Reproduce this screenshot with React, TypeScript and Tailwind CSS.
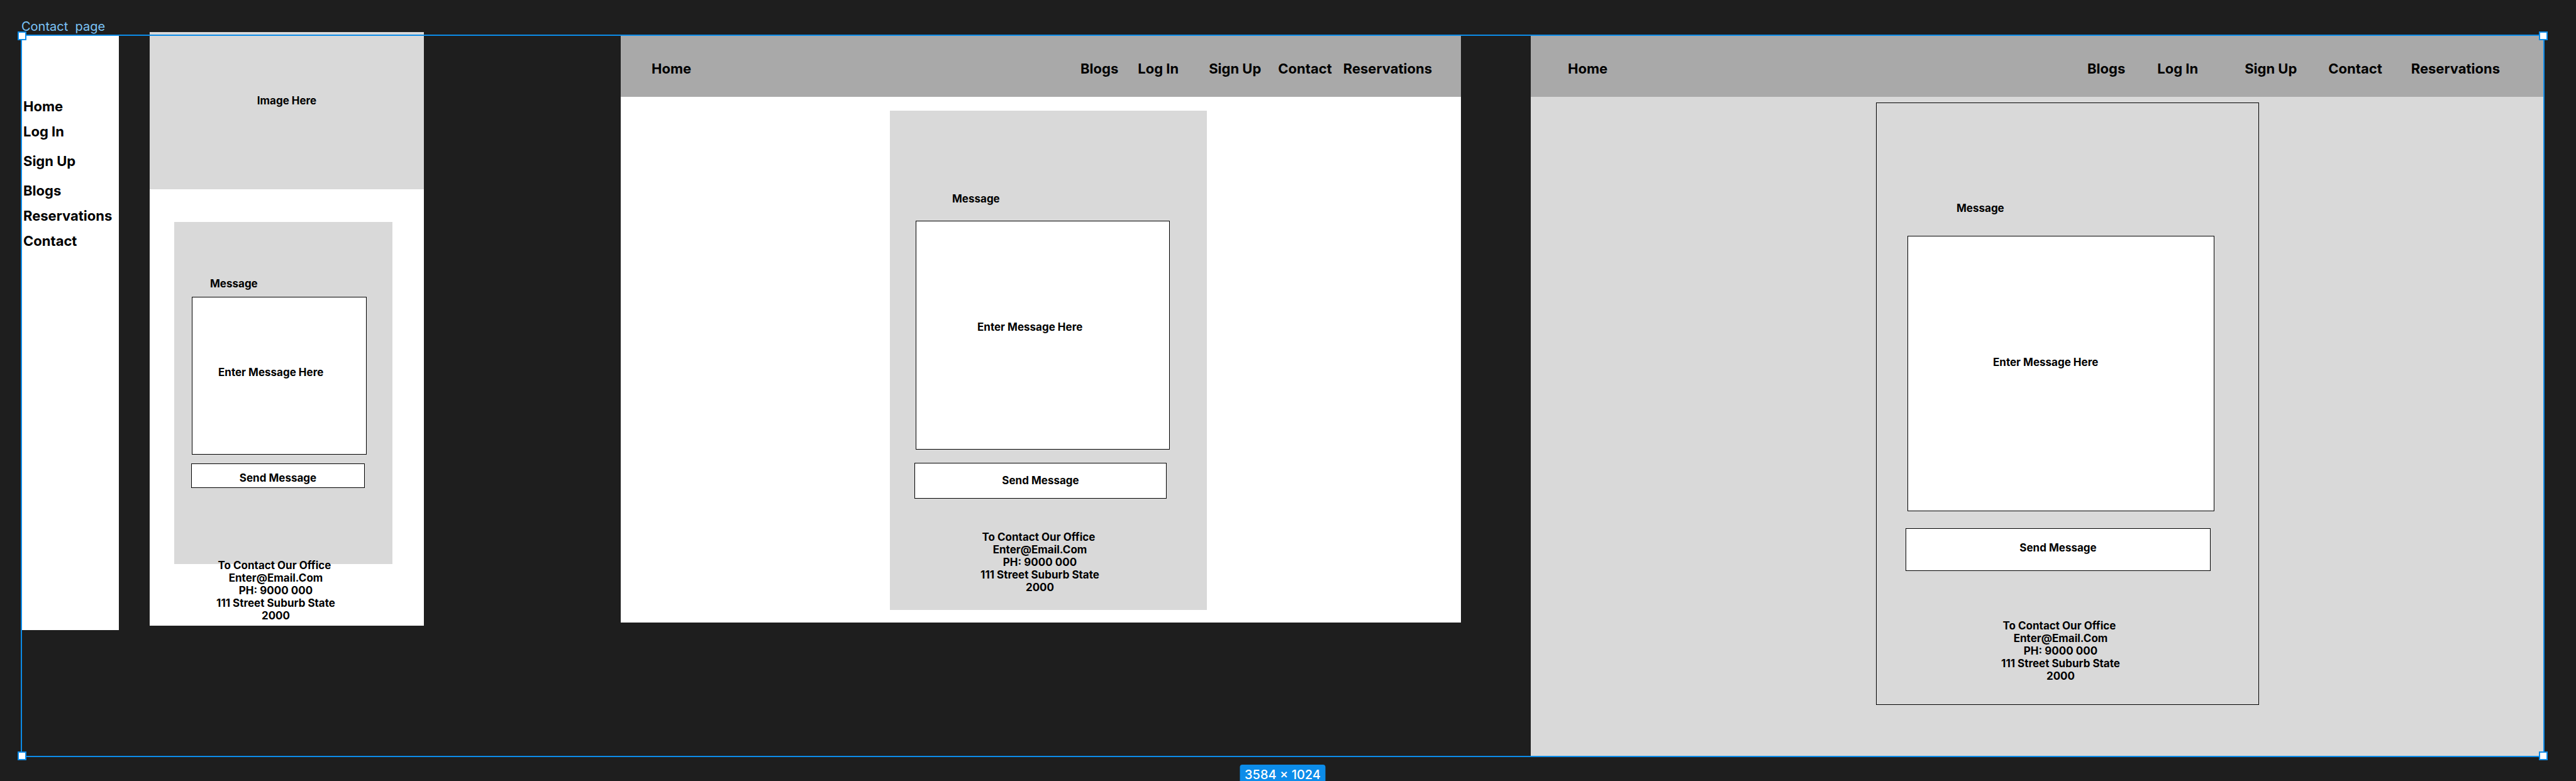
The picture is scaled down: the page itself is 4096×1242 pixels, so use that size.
import React from "react";

type NavLink = { label: string; className: string };

const menuLinks: NavLink[] = [
  { label: "Home", className: "" },
  { label: "Log In", className: "" },
  { label: "Sign Up", className: "my-[7px]" },
  { label: "Blogs", className: "" },
  { label: "Reservations", className: "" },
  { label: "Contact", className: "" },
];

const tabletLinks: NavLink[] = [
  { label: "Blogs", className: "" },
  { label: "Log In", className: "ml-[31px]" },
  { label: "Sign Up", className: "ml-12" },
  { label: "Contact", className: "ml-[27px]" },
  { label: "Reservations", className: "ml-[18px]" },
];

const desktopLinks: NavLink[] = [
  { label: "Blogs", className: "" },
  { label: "Log In", className: "ml-[51px]" },
  { label: "Sign Up", className: "ml-[74px]" },
  { label: "Contact", className: "ml-[50px]" },
  { label: "Reservations", className: "ml-[46px]" },
];

function SiteHeader({ links, className }: { links: NavLink[]; className: string }) {
  return (
    <header
      className={`flex justify-between bg-[#a9a9a9] pt-[39px] pb-[31px] text-[22px] leading-[28px] ${className}`}
    >
      <a href="#home">Home</a>
      <nav className="flex">
        {links.map((link) => (
          <a key={link.label} href="#" className={link.className}>
            {link.label}
          </a>
        ))}
      </nav>
    </header>
  );
}

function MessageForm(props: {
  id: string;
  label: string;
  box: string;
  button: string;
}) {
  return (
    <form className="flex flex-col" onSubmit={(e) => e.preventDefault()}>
      <label htmlFor={props.id} className={props.label}>
        Message
      </label>
      <textarea
        id={props.id}
        placeholder="Enter Message Here"
        className={`block resize-none overflow-hidden border border-black bg-white placeholder:text-black placeholder:opacity-100 ${props.box}`}
      />
      <button
        type="submit"
        className={`border border-black bg-white text-center ${props.button}`}
      >
        Send Message
      </button>
    </form>
  );
}

function OfficeDetails({ className }: { className: string }) {
  return (
    <address className={`text-center whitespace-pre not-italic ${className}`}>
      <p>{"To Contact Our Office "}</p>
      <p>Enter@Email.Com</p>
      <p>PH: 9000 000</p>
      <p>111 Street Suburb State</p>
      <p>2000</p>
    </address>
  );
}

function MenuFrame() {
  return (
    <section className="min-w-0 flex-[155_1_0px] bg-white">
      <nav className="flex flex-col gap-3 pt-[99px] pb-[605px] pl-[3px] text-[22px] leading-[28px]">
        {menuLinks.map((link) => (
          <a key={link.label} href="#" className={link.className}>
            {link.label}
          </a>
        ))}
      </nav>
    </section>
  );
}

function MobileFrame() {
  return (
    <section className="-mt-[5px] ml-[49px] min-w-0 flex-[436_1_0px] bg-white pb-[6px]">
      <div className="bg-[#d9d9d9] pt-[99px] pb-[131px] text-center">Image Here</div>
      <div className="mt-[52px] grid grid-cols-[39fr_347fr_50fr]">
        <div className="col-start-2 bg-[#d9d9d9] pt-[88px] pb-[121px]">
          <MessageForm
            id="message-mobile"
            label="ml-[57px]"
            box="mt-[11px] mr-[41px] ml-7 h-[251px] pt-[109px] pl-[41px]"
            button="mt-[14px] mr-[44px] ml-[27px] h-[39px] pt-[6px]"
          />
        </div>
      </div>
      <OfficeDetails className="relative -mt-2 mr-[35px]" />
    </section>
  );
}

function TabletFrame() {
  return (
    <section className="ml-[313px] min-w-0 flex-[1336_1_0px] bg-white pb-5">
      <SiteHeader links={tabletLinks} className="pr-[46px] pl-[49px]" />
      <div className="mt-[22px] grid grid-cols-[428fr_504fr_404fr]">
        <div className="col-start-2 bg-[#d9d9d9] pt-[130px] pb-[26px]">
          <MessageForm
            id="message-tablet"
            label="ml-[99px]"
            box="mt-[25px] mr-[59px] ml-[41px] h-[364px] pt-[158px] pl-[97px]"
            button="mt-[21px] mr-[64px] ml-[39px] h-[57px] pb-[2px]"
          />
          <OfficeDetails className="mt-[51px] mr-[27px]" />
        </div>
      </div>
    </section>
  );
}

function DesktopFrame() {
  return (
    <section className="ml-[111px] min-w-0 flex-[1611_1_0px] bg-[#d9d9d9] pb-[82px]">
      <SiteHeader links={desktopLinks} className="pr-[70px] pl-[59px]" />
      <div className="mt-[9px] grid grid-cols-[549fr_609fr_453fr]">
        <div className="col-start-2 border border-black pt-[157px] pb-[35px]">
          <MessageForm
            id="message-desktop"
            label="ml-[127px]"
            box="mt-[34px] mr-[70px] ml-[49px] h-[438px] pt-[190px] pl-[135px]"
            button="mt-[27px] mr-[76px] ml-[46px] h-[68px] pb-[6px]"
          />
          <OfficeDetails className="mt-[77px] mr-[22px]" />
        </div>
      </div>
    </section>
  );
}

function Selection() {
  const handle = "absolute size-[14px] border-2 border-[#0c8ce9] bg-white";
  return (
    <div className="pointer-events-none absolute -inset-px border-2 border-[#0c8ce9]">
      <span className={`${handle} -top-[7px] -left-[7px]`} />
      <span className={`${handle} -top-[7px] -right-[7px]`} />
      <span className={`${handle} -bottom-[7px] -left-[7px]`} />
      <span className={`${handle} -right-[7px] -bottom-[7px]`} />
      <span className="absolute top-full left-1/2 mt-[14px] -translate-x-1/2 rounded-[4px] bg-[#0c8ce9] px-2 py-[6px] text-[20px] leading-[20px] font-medium whitespace-nowrap text-white">
        3584 × 1024
      </span>
    </div>
  );
}

export default function App() {
  return (
    <main className="min-h-screen overflow-hidden bg-[#1e1e1e] pt-[30px] pr-[51px] pb-[39px] pl-[34px] font-['Inter',sans-serif] text-[17px] leading-[20px] font-bold text-black">
      <h1 className="text-[20px] leading-[24px] font-normal whitespace-pre text-[#7cc4f8]">
        {"Contact  page"}
      </h1>
      <div className="relative mt-[2px] flex items-start">
        <MenuFrame />
        <MobileFrame />
        <TabletFrame />
        <DesktopFrame />
        <Selection />
      </div>
    </main>
  );
}
